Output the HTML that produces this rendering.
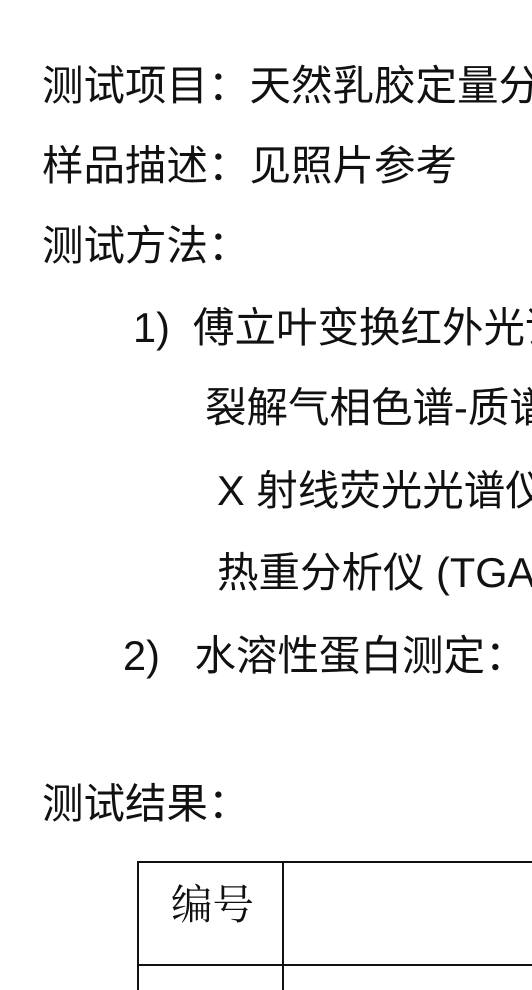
<!DOCTYPE html>
<html style="overflow:hidden"><head><meta charset="utf-8"><style>
html,body{margin:0;width:532px;height:990px;overflow:hidden}
body{background:#fff;position:relative;font-family:"Liberation Sans","Noto Sans CJK SC",sans-serif;color:#111}
.l{position:absolute;white-space:nowrap;font-size:41.5px;line-height:44px}
</style></head><body>
<div class="l" style="left:42px;top:64px">测试项目：天然乳胶定量分析</div>
<div class="l" style="left:42px;top:144px">样品描述：见照片参考</div>
<div class="l" style="left:42px;top:224px">测试方法：</div>
<div class="l" style="left:133px;top:306px">1)&nbsp; 傅立叶变换红外光谱</div>
<div class="l" style="left:205px;top:386px">裂解气相色谱-质谱</div>
<div class="l" style="left:217px;top:469px">X 射线荧光光谱仪</div>
<div class="l" style="left:217px;top:551px">热重分析仪 (TGA)</div>
<div class="l" style="left:123px;top:634px">2)&nbsp;&nbsp; 水溶性蛋白测定：</div>
<div class="l" style="left:42px;top:782px">测试结果：</div>
<div style="position:absolute;left:137px;top:861px;width:420px;height:200px;border:2px solid #111"></div>
<div style="position:absolute;left:282px;top:861px;width:2px;height:140px;background:#111"></div>
<div style="position:absolute;left:137px;top:964px;width:400px;height:2px;background:#111"></div>
<div class="l" style="left:171px;top:879px;font-family:'Noto Serif CJK SC',serif">编号</div>
</body></html>
